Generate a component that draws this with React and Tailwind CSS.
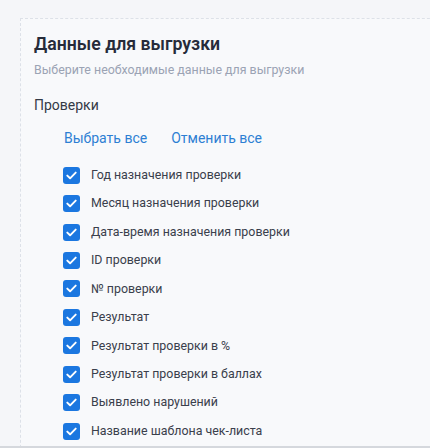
import React from "react";

const items = [
  "Год назначения проверки",
  "Месяц назначения проверки",
  "Дата-время назначения проверки",
  "ID проверки",
  "№ проверки",
  "Результат",
  "Результат проверки в %",
  "Результат проверки в баллах",
  "Выявлено нарушений",
  "Название шаблона чек-листа",
];

function Check() {
  return (
    <span className="flex h-[17px] w-[17px] shrink-0 items-center justify-center rounded-[3px] bg-[#1b77e0]">
      <svg width="11" height="9" viewBox="0 0 11 9" fill="none">
        <path d="M1.3 4.6 L4.1 7.3 L9.7 1.6" stroke="white" strokeWidth="1.9" strokeLinecap="round" strokeLinejoin="round" />
      </svg>
    </span>
  );
}

export default function App() {
  return (
    <div
      className="relative h-[448px] w-[430px] overflow-hidden bg-[#f5f6f9]"
      style={{ fontFamily: "Roboto, 'Noto Sans', sans-serif" }}
    >
      <div className="pl-[20px] pt-[18px]">
        <div className="h-[460px] w-[440px] border-l border-t border-dashed border-[#dde1e8] bg-[#f8f9fb] pl-[13px] pt-[13px]">
          <h1 className="text-[17.7px] font-semibold leading-[24px] text-[#262b3a]">Данные для выгрузки</h1>
          <p className="mt-[6px] text-[12.4px] leading-[16px] text-[#9ba3b4]">Выберите необходимые данные для выгрузки</p>
          <p className="mt-[17px] text-[14px] leading-[20px] text-[#343a46]">Проверки</p>
          <div className="mt-[13px] flex gap-[24px] pl-[30px] text-[14px] leading-[20px] text-[#2d7fd3]">
            <button>Выбрать все</button>
            <button>Отменить все</button>
          </div>
          <ul className="mt-[13px] pl-[29px]">
            {items.map((t) => (
              <li key={t} className="flex h-[28.44px] items-center gap-[11px] text-[12.4px] font-normal text-[#3a404c]">
                <Check />
                <span>{t}</span>
              </li>
            ))}
          </ul>
        </div>
      </div>
      <div className="absolute bottom-0 left-0 h-[2px] w-full bg-[#d5d8dd]" />
    </div>
  );
}
